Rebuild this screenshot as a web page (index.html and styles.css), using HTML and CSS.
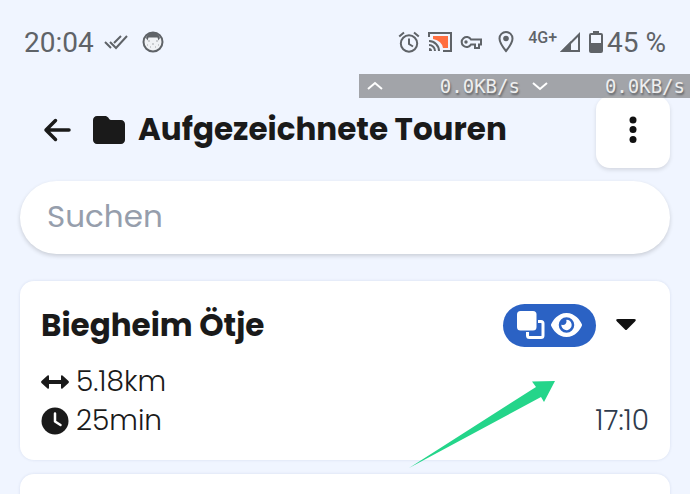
FILE: index.html
```html
<!DOCTYPE html>
<html lang="de">
<head>
  <meta charset="UTF-8" />
  <meta name="viewport" content="width=device-width, initial-scale=1.0"/>
  <title>Aufgezeichnete Touren</title>
  <link rel="stylesheet" href="styles.css">
</head>
<body>

<div class="status-bar">
  <span class="clock">20:04</span>
  <svg class="icon-checks" width="24" height="16" viewBox="0 0 24 16" fill="none" stroke="#5f6368" stroke-width="2"><path d="M1 8l6 6M6 8l6 6L23 2M10 9l7-7"/></svg>
  <svg class="icon-face" width="22" height="22" viewBox="0 0 22 22">
    <circle cx="11" cy="11" r="9.5" fill="#f0f2f5" stroke="#5f6368" stroke-width="2"/>
    <path d="M4 7Q6 1.500 11 1.500T18 7L16.500 9.500 15.500 6.500H6.500L5.500 9.500z" fill="#5f6368"/>
    <path d="M6 10h2M14 10h2M10 13h2M8 16h1M13 16h1M5 14h1M16 14h1" stroke="#a5a8ac" stroke-width="1"/>
  </svg>

  <div class="status-right">
    <svg width="22" height="22" viewBox="0 0 22 22" fill="none" stroke="#5f6368" stroke-width="2"><circle cx="11" cy="12.500" r="8.200"/><path d="M11 7.500v5.500l4 2.500M1.200 5.500L6 1.500M20.800 5.500L16 1.500"/></svg>
    <svg width="24" height="20" viewBox="0 0 24 20" fill="none" stroke="#5f6368" stroke-width="2">
      <path d="M5 4h15v12h-5Q14 9 5 7z" fill="#ff6e40" stroke="none"/>
      <path d="M1 5V1h22v18h-8M1 9a10 10 0 0 1 10 10M1 13a6 6 0 0 1 6 6"/>
      <path d="M1 16a3 3 0 0 1 3 3H1z" fill="#5f6368" stroke="none"/>
    </svg>
    <svg class="icon-key" width="22" height="14" viewBox="0 0 22 14" fill="none" stroke="#5f6368" stroke-width="2"><path d="M11 4.500A5 5 0 1 0 11 9.500h4V13h4V9.500h2V4.500z"/><circle cx="6" cy="7" r="1.700" fill="#5f6368" stroke="none"/></svg>
    <svg class="icon-pin" width="16" height="22" viewBox="0 0 16 22"><path d="M8 1a6.500 6.500 0 0 0-6.500 6.500C1.500 12 8 20 8 20s6.500-8 6.500-12.500A6.500 6.500 0 0 0 8 1z" fill="none" stroke="#5f6368" stroke-width="2"/><circle cx="8" cy="7.500" r="2.800" fill="#5f6368"/></svg>
    <span class="network">4G+</span>
    <svg width="22" height="22" viewBox="0 0 22 22"><path d="M20 3.500V20H3.500z" fill="none" stroke="#5f6368" stroke-width="2"/><path d="M1 21L12 10v11z" fill="#5f6368"/></svg>
    <svg class="icon-battery" width="14" height="22" viewBox="0 0 14 22"><path d="M4 0h6v3H4z" fill="#5f6368"/><rect x="1" y="3" width="12" height="18" rx="1" fill="none" stroke="#5f6368" stroke-width="2"/><path d="M1 12h12v9H1z" fill="#5f6368"/></svg>
    <span class="battery-text">45 %</span>
  </div>

  <div class="net-speed">
    <svg width="16" height="10" viewBox="0 0 16 10" fill="none" stroke="#fff" stroke-width="2"><path d="M1 8l7-6 7 6"/></svg>
    <span class="speed">0.0KB/s</span>
    <svg width="16" height="10" viewBox="0 0 16 10" fill="none" stroke="#fff" stroke-width="2"><path d="M1 2l7 6 7-6"/></svg>
    <span class="speed">0.0KB/s</span>
  </div>
</div>

<main class="container">
  <header class="page-header">
    <a href="#" class="back" aria-label="Zurück">
      <svg width="28" height="24" viewBox="0 0 28 24" fill="none" stroke="#1a1a1a" stroke-width="3.500" stroke-linecap="round" stroke-linejoin="round"><path d="M12.500 2.500L3 12l9.500 9.500M3 12h23"/></svg>
    </a>
    <svg width="32" height="32" viewBox="0 0 512 512" fill="#1a1a1a"><path d="M64 480H448c35.300 0 64-28.700 64-64V160c0-35.300-28.700-64-64-64H288c-10.100 0-19.600-4.700-25.600-12.800L243.200 57.600C231.100 41.500 212.100 32 192 32H64C28.700 32 0 60.700 0 96V416c0 35.300 28.700 64 64 64z"/></svg>
    <h1>Aufgezeichnete Touren</h1>
    <button type="button" class="menu-btn" aria-label="Menü">
      <svg width="8" height="28" viewBox="0 0 8 28" fill="#111"><circle cx="4" cy="4" r="3.500"/><circle cx="4" cy="13.500" r="3.500"/><circle cx="4" cy="23.500" r="3.500"/></svg>
    </button>
  </header>

  <input type="search" class="search" placeholder="Suchen" aria-label="Suchen">

  <article class="card">
    <div class="card-head">
      <h2>Biegheim Ötje</h2>
      <button type="button" class="badge-btn" aria-label="Auf Karte anzeigen">
        <svg width="28" height="28" viewBox="0 0 28 28"><rect x="10.500" y="10.500" width="15.500" height="16" rx="2" fill="none" stroke="#fff" stroke-width="3"/><rect x="-1" y="-1" width="22" height="22" rx="4" fill="#2b62c4"/><rect x="0" y="0" width="19.500" height="19.500" rx="3.500" fill="#fff"/></svg>
        <svg width="31" height="28" viewBox="0 0 576 512" fill="#fff"><path d="M288 32c-80.800 0-145.500 36.800-192.600 80.600C48.600 156 17.300 208 2.500 243.700c-3.300 7.900-3.300 16.700 0 24.600C17.300 304 48.600 356 95.400 399.400C142.500 443.200 207.200 480 288 480s145.500-36.800 192.600-80.600c46.800-43.500 78.100-95.400 93-131.100c3.300-7.900 3.300-16.700 0-24.600c-14.900-35.700-46.200-87.700-93-131.100C433.500 68.800 368.800 32 288 32zM144 256a144 144 0 1 1 288 0 144 144 0 1 1 -288 0zm144-64c0 35.300-28.700 64-64 64c-7.100 0-13.900-1.200-20.300-3.300c-5.500-1.800-11.900 1.600-11.700 7.400c.3 6.900 1.300 13.800 3.200 20.700c13.700 51.200 66.400 81.600 117.600 67.900s81.600-66.400 67.900-117.600c-11.100-41.500-47.800-69.400-88.600-71.100c-5.800-.2-9.200 6.100-7.400 11.700c2.100 6.400 3.300 13.200 3.300 20.300z" fill-rule="evenodd"/></svg>
      </button>
      <button type="button" class="toggle-btn" aria-label="Mehr">
        <svg width="20" height="14" viewBox="0 0 20 14" fill="#111"><path d="M2 1h16q3 0 1 2.500l-8 8q-1 1-2 0l-8-8Q-1 1 2 1z"/></svg>
      </button>
    </div>
    <div class="card-body">
      <div class="stats">
        <div class="stat">
          <svg width="28" height="28" viewBox="0 0 28 28" fill="#1a1a1a"><path d="M.5 13L6.500 7.500Q8 6.500 8 8.500V12h12V8.500q0-2 1.500-1L27.500 13q.8 1 0 2l-6 5.500q-1.500 1-1.500-1V16H8v3.500q0 2-1.500 1L.5 15q-.8-1 0-2z"/></svg>
          <span>5.18km</span>
        </div>
        <div class="stat">
          <svg width="28" height="28" viewBox="0 0 28 28"><circle cx="14" cy="14" r="13.500" fill="#1a1a1a"/><path d="M14 6.500v8l5.500 3.500" fill="none" stroke="#fff" stroke-width="2.500" stroke-linecap="round" stroke-linejoin="round"/></svg>
          <span>25min</span>
        </div>
      </div>
      <time class="time">17:10</time>
    </div>
    <svg class="pointer-arrow" width="148" height="90" viewBox="0 0 148 90" fill="#24d58a"><path d="M1 88L128 7l-4-5.500L147 1l-11 21-3-5z"/></svg>
  </article>

  <article class="card"></article>
</main>

</body>
</html>
```
FILE: styles.css
```css
* {
  box-sizing: border-box;
}

body {
  margin: 0;
  background-color: #f0f5ff;
  color: #1a1a1a;
  font-family: Poppins, Inter, sans-serif;
  overflow: hidden;
}

svg {
  display: block;
  flex-shrink: 0;
}

button {
  border: none;
  padding: 0;
  cursor: pointer;
}

.status-bar {
  position: relative;
  display: flex;
  align-items: center;
  height: 84px;
  padding: 0 24px;
  color: #5f6368;
  font-family: Roboto, sans-serif;
  font-size: 28px;
}

.icon-checks {
  margin-left: 10px;
}

.icon-face {
  margin-left: 14px;
}

.status-right {
  display: flex;
  align-items: center;
  gap: 8px;
  margin-left: auto;
}

.icon-pin {
  margin: 0 6px 0 8px;
}

.network {
  align-self: flex-start;
  padding-top: 2px;
  margin-right: -6px;
  font-size: 16px;
  font-weight: 500;
}

.battery-text {
  margin-left: -4px;
}

.net-speed {
  position: absolute;
  top: 74px;
  right: 0;
  z-index: 1;
  display: flex;
  align-items: center;
  width: 48%;
  height: 24px;
  padding: 0 5px 0 8px;
  background-color: rgba(128, 130, 132, 0.7);
  color: #eee;
  font-family: "DejaVu Sans Mono", monospace;
  font-size: 19px;
  text-shadow: 1px 2px 2px rgba(0, 0, 0, 0.4);
}

.speed {
  flex: 1;
  margin-right: 12px;
  text-align: right;
}

.speed:last-child {
  margin-right: 0;
}

.container {
  padding: 12px 20px 0;
}

.page-header {
  display: flex;
  align-items: center;
  height: 72px;
  padding: 0 0 5px 23px;
}

.back {
  margin-right: 22px;
}

h1 {
  margin: 0 0 0 13px;
  font-size: 31px;
  font-weight: 700;
  white-space: nowrap;
}

.menu-btn {
  display: flex;
  align-items: center;
  align-self: flex-start;
  justify-content: center;
  width: 74px;
  height: 72px;
  padding-bottom: 5px;
  margin-left: auto;
  border-radius: 14px;
  background-color: #fff;
  box-shadow: 0 2px 4px rgba(0, 0, 0, 0.12);
}

.search {
  display: block;
  width: 100%;
  height: 73px;
  margin: 13px 0 27px;
  padding: 0 27px 2px;
  border: none;
  border-radius: 37px;
  background-color: #fff;
  box-shadow: 0 2px 4px rgba(0, 0, 0, 0.16);
  font-family: inherit;
  font-size: 31px;
}

.search::placeholder {
  color: #969eac;
}

.card {
  position: relative;
  min-height: 80px;
  margin-bottom: 14px;
  padding: 22px 21px 20px;
  border-radius: 14px;
  background-color: #fff;
  box-shadow: 0 0 3px rgba(30, 60, 120, 0.12);
}

.card-head {
  display: flex;
  align-items: center;
  height: 44px;
}

.card-head h2 {
  flex: 1;
  margin: 0;
  font-size: 31px;
  font-weight: 700;
}

.badge-btn {
  display: flex;
  align-items: center;
  gap: 6px;
  height: 43px;
  padding: 0 14px;
  border-radius: 22px;
  background-color: #2b62c4;
}

.toggle-btn {
  margin: 0 13px 0 20px;
  background: none;
}

.card-body {
  display: flex;
  align-items: flex-end;
  justify-content: space-between;
  margin-top: 15px;
  font-size: 28px;
  font-weight: 300;
  line-height: 39px;
}

.stat {
  display: flex;
  align-items: center;
  gap: 7px;
}

.time {
  color: #2f3b4c;
}

.pointer-arrow {
  position: absolute;
  right: 114px;
  bottom: -10px;
}
```
